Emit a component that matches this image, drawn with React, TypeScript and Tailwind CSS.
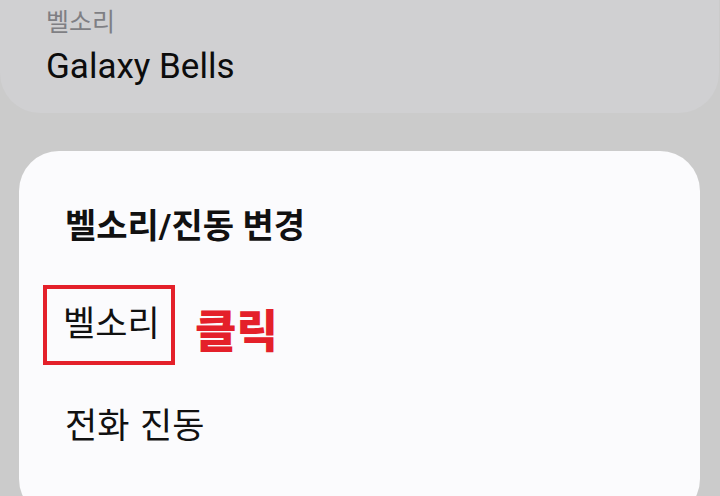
export default function App() {
  const font = { fontFamily: 'Roboto, "Noto Sans CJK KR", sans-serif' };

  return (
    <div className="h-[496px] w-[720px] overflow-hidden bg-[#cbcbcb]" style={font}>
      {/* ringtone summary card */}
      <div className="h-[113px] w-[719px] rounded-b-[40px] bg-[#d0d0d2] pl-[46px] pt-[8px]">
        <div className="text-[25px] leading-[30px] text-[#7f7f84]">벨소리</div>
        <div className="mt-[7px] text-[35px] leading-[44px] text-[#0c0c0c]">Galaxy Bells</div>
      </div>

      {/* change dialog */}
      <div className="ml-[19px] mr-[20px] mt-[38px] h-[368px] rounded-[40px] bg-[#fbfbfd] pl-[46px] pt-[55px]">
        <div className="text-[34px] font-bold leading-[40px] text-[#111]">벨소리/진동 변경</div>

        <div className="mt-[39px] flex items-center">
          <span className="-ml-[22px] flex h-[80px] w-[132px] items-center border-[4px] border-[#e4202a] pl-[16px] text-[35px] leading-[40px] text-[#111]">
            벨소리
          </span>
          <span className="ml-[20px] mt-[16px] text-[45px] font-black leading-[48px] text-[#e4202a]">클릭</span>
        </div>

        <div className="mt-[42px] text-[35px] leading-[40px] text-[#111] [word-spacing:2px]">전화 진동</div>
      </div>
    </div>
  );
}
